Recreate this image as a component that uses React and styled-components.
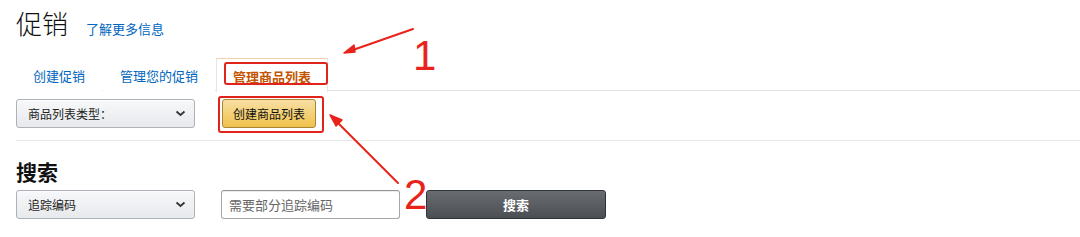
import React from "react";
import styled, { createGlobalStyle } from "styled-components";

const Global = createGlobalStyle`
  html, body { margin: 0; padding: 0; background: #fff; }
  body { font-family: "Liberation Sans", "Noto Sans CJK SC", sans-serif; color: #111; }
  * { box-sizing: border-box; }
`;

const Page = styled.div`
  position: relative;
  width: 1080px;
  height: 237px;
  overflow: hidden;
  padding-left: 16px;
`;

const Header = styled.div`
  display: flex;
  align-items: baseline;
  gap: 18px;
  height: 58px;
  padding-top: 4px;
`;

const Title = styled.h1`
  margin: 0;
  font-family: "Noto Sans CJK SC", sans-serif;
  font-weight: 300;
  font-size: 26px;
  line-height: 38px;
  color: #111;
`;

const Link = styled.a`
  font-family: "Noto Sans CJK SC", sans-serif;
  font-size: 13px;
  color: #0066c0;
  text-decoration: none;
`;

const TabBar = styled.div`
  display: flex;
  height: 33px;
  border-bottom: 1px solid #e3e3e3;
`;

const Tab = styled.div`
  position: relative;
  padding: 1px 16px 0;
  height: ${(p) => (p.$active ? "34px" : "33px")};
  display: flex;
  align-items: center;
  font-family: "Noto Sans CJK SC", sans-serif;
  font-size: 13px;
  color: ${(p) => (p.$active ? "#c45500" : "#0066c0")};
  font-weight: ${(p) => (p.$active ? 700 : 400)};
  margin-right: 1px;
  background: #fff;
  border: 1px solid ${(p) => (p.$active ? "#e6e6e6" : "transparent")};
  border-top-color: ${(p) => (p.$active ? "#f1cfa8" : "transparent")};
  border-bottom: none;
`;

const AnnoBox = styled.div`
  position: absolute;
  border: 2px solid #e0241c;
  border-radius: 3px;
  pointer-events: none;
`;

const ActionRow = styled.div`
  display: flex;
  align-items: center;
  gap: 27px;
  padding-top: 8px;
  padding-bottom: 12px;
  border-bottom: 1px solid #e7e7e7;
`;

const SelectBox = styled.div`
  width: 179px;
  height: 29px;
  display: flex;
  align-items: center;
  justify-content: space-between;
  padding: 0 8px 0 11px;
  border: 1px solid #adb1b8;
  border-radius: 3px;
  background: linear-gradient(#f7f8fa, #e7e9ec);
  font-family: "Noto Sans CJK SC", sans-serif;
  font-size: 12px;
  color: #222;
  box-shadow: 0 1px 0 rgba(255, 255, 255, 0.6) inset;
`;

const YellowButton = styled.button`
  position: relative;
  width: 94px;
  height: 29px;
  padding: 0;
  border: 1px solid #a88734;
  border-radius: 3px;
  background: linear-gradient(#f7dfa5, #f0c14b);
  font-family: "Noto Sans CJK SC", sans-serif;
  font-size: 12px;
  color: #111;
`;

const SearchTitle = styled.h2`
  margin: 0;
  padding-top: 16px;
  font-family: "Noto Sans CJK SC", sans-serif;
  font-size: 21px;
  font-weight: 700;
  line-height: 28px;
  color: #111;
`;

const SearchRow = styled.div`
  display: flex;
  align-items: center;
  gap: 26px;
  margin-top: 5px;
`;

const TextInput = styled.div`
  width: 179px;
  height: 29px;
  display: flex;
  align-items: center;
  padding-left: 7px;
  border: 1px solid #a6a6a6;
  border-top-color: #949494;
  border-radius: 3px;
  box-shadow: 0 1px 0 rgba(255, 255, 255, 0.5), 0 1px 0 rgba(0, 0, 0, 0.07) inset;
  font-family: "Noto Sans CJK SC", sans-serif;
  font-size: 13px;
  color: #666;
  background: #fff;
`;

const DarkButton = styled.button`
  width: 180px;
  height: 29px;
  padding: 0;
  border: 1px solid #2f3237;
  border-radius: 3px;
  background: linear-gradient(#696d72, #4b4f54);
  font-family: "Noto Sans CJK SC", sans-serif;
  font-size: 13px;
  font-weight: 700;
  color: #fff;
`;

const Overlay = styled.svg`
  position: absolute;
  left: 0;
  top: 0;
  pointer-events: none;
`;

const Num = styled.span`
  position: absolute;
  left: ${(p) => p.$x}px;
  top: ${(p) => p.$y}px;
  font-family: "Liberation Sans", sans-serif;
  font-size: 42px;
  line-height: 42px;
  color: #e8231b;
`;

const Chevron = () => (
  <svg width="11" height="7" viewBox="0 0 11 7">
    <path d="M1.5 1.5 L5.5 5 L9.5 1.5" fill="none" stroke="#333" strokeWidth="1.8" />
  </svg>
);

export default function App() {
  return (
    <>
      <Global />
      <Page>
        <Header>
          <Title>促销</Title>
          <Link>了解更多信息</Link>
        </Header>
        <TabBar>
          <Tab>创建促销</Tab>
          <Tab>管理您的促销</Tab>
          <Tab $active>
            管理商品列表
            <AnnoBox style={{ left: 7, top: 3, width: 104, height: 23 }} />
          </Tab>
        </TabBar>
        <ActionRow>
          <SelectBox>
            <span>商品列表类型：</span>
            <Chevron />
          </SelectBox>
          <YellowButton>
            创建商品列表
            <AnnoBox style={{ left: -5, top: -4, width: 106, height: 37 }} />
          </YellowButton>
        </ActionRow>
        <SearchTitle>搜索</SearchTitle>
        <SearchRow>
          <SelectBox>
            <span>追踪编码</span>
            <Chevron />
          </SelectBox>
          <TextInput>需要部分追踪编码</TextInput>
          <DarkButton>搜索</DarkButton>
        </SearchRow>

        <Overlay width="1080" height="237" viewBox="0 0 1080 237">
          <path d="M413 29 L350 51" stroke="#e8231b" strokeWidth="2" strokeLinecap="round" />
          <path d="M344 53 L354 45 L355 52 Z" fill="#e8231b" stroke="#e8231b" strokeWidth="1.5" strokeLinejoin="round" />
          <path d="M398 183 L335 120" stroke="#e8231b" strokeWidth="2" strokeLinecap="round" />
          <path d="M330 115 L342 120 L336 126 Z" fill="#e8231b" stroke="#e8231b" strokeWidth="1.5" strokeLinejoin="round" />
        </Overlay>
        <Num $x={413} $y={35}>1</Num>
        <Num $x={404} $y={174}>2</Num>
      </Page>
    </>
  );
}
